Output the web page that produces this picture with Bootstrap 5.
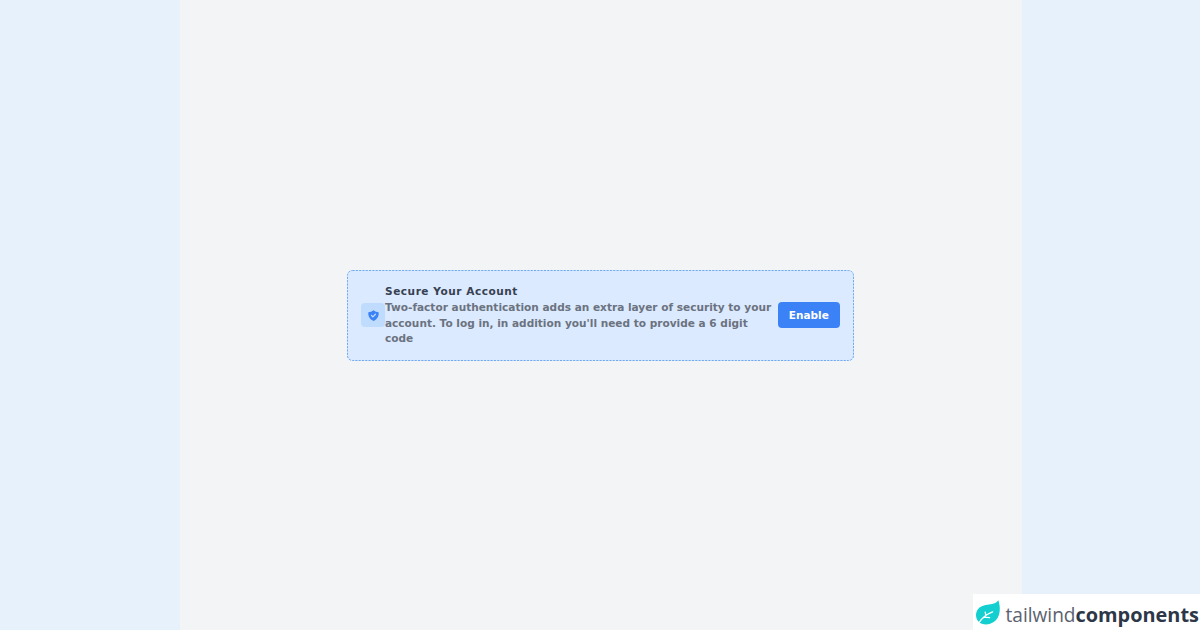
<!DOCTYPE html>
<html lang="en">
<head>
    <meta charset="UTF-8">
    <meta name="viewport" content="width=device-width, initial-scale=1.0">
    <title>Secure Your Account</title>
    <link href="https://cdn.jsdelivr.net/npm/bootstrap@5.3.0/dist/css/bootstrap.min.css" rel="stylesheet">
    <style>
        body {
            background: #e6f1fc;
            font-family: "DejaVu Sans", sans-serif;
        }
        .preview {
            width: 842px;
            margin-left: 180px;
            background: #f3f4f6;
        }
        .notice {
            width: 507px;
            height: 91px;
            margin-right: 1px;
            padding: 0 14px;
            background: #dbeafe;
            border-radius: 5.3px;
            font-size: 10.55px;
            line-height: 15.8px;
            font-weight: 700;
            color: #6b7280;
        }
        .notice-icon {
            width: 24px;
            height: 24px;
            background: #bfdbfe;
            border-radius: 4px;
        }
        .notice-text {
            width: 393px;
            padding-top: 1px;
        }
        .notice-title {
            font-size: inherit;
            line-height: inherit;
            font-weight: 700;
            letter-spacing: 0.53px;
            color: #374151;
        }
        .btn-enable {
            --bs-btn-padding-x: 0;
            --bs-btn-padding-y: 0;
            --bs-btn-font-size: 10.53px;
            --bs-btn-font-weight: 700;
            --bs-btn-line-height: 26px;
            --bs-btn-color: #fff;
            --bs-btn-bg: #3b82f6;
            --bs-btn-hover-color: #fff;
            --bs-btn-hover-bg: #2563eb;
            --bs-btn-border-width: 0;
            --bs-btn-border-radius: 4px;
            width: 61.5px;
        }
        .brand {
            width: 227px;
            height: 36px;
            background: #fff;
        }
    </style>
</head>
<body>
    <main class="preview vh-100 d-flex align-items-center justify-content-center">
        <div class="notice position-relative d-flex align-items-center">
            <!-- Fine dashed outline -->
            <svg class="position-absolute top-0 start-0 pe-none" width="507" height="91" viewBox="0 0 507 91">
                <rect x="0.5" y="0.5" width="506" height="90" rx="5" fill="none" stroke="#6fa9f5" stroke-dasharray="2.1 1.2"/>
            </svg>
            <div class="notice-icon flex-shrink-0 d-flex align-items-center justify-content-center">
                <svg width="13" height="13" viewBox="0 0 20 20" fill="#3b82f6">
                    <path fill-rule="evenodd" clip-rule="evenodd" d="M2.166 4.999A11.954 11.954 0 0010 1.944 11.954 11.954 0 0017.834 5c.11.65.166 1.32.166 2.001 0 5.225-3.34 9.67-8 11.317C5.34 16.67 2 12.225 2 7c0-.682.057-1.35.166-2.001zm11.541 3.708a1 1 0 00-1.414-1.414L9 10.586 7.707 9.293a1 1 0 00-1.414 1.414l2 2a1 1 0 001.414 0l4-4z"/>
                </svg>
            </div>
            <div class="notice-text flex-shrink-0">
                <h1 class="notice-title mb-0">Secure Your Account</h1>
                <p class="mb-0">Two-factor authentication adds an extra layer of security to your account. To log in, in addition you'll need to provide a 6 digit code</p>
            </div>
            <button type="button" class="btn btn-enable flex-shrink-0">Enable</button>
        </div>
    </main>

    <!-- Brand badge over the bottom right corner -->
    <div class="brand position-fixed bottom-0 end-0">
        <svg class="d-block" width="227" height="36" viewBox="0 0 227 36">
            <path fill="#14cfd0" d="M25.4 6.2C27 11.5 27.8 18 24.8 23.6C21.8 29.4 14.6 31.6 9 29.8C3.4 28 1.4 20.8 4.4 16C6.8 11.8 11.6 11 16 10.4C20.4 9.8 23.6 9 25.4 6.2Z"/>
            <path fill="none" stroke="#fff" stroke-width="1.3" stroke-linecap="round" d="M5.4 29.4C8.2 24.8 12.4 20.6 19.6 17.8M12.8 21.2L12.2 18.2M10.8 23.2L16.6 23.6"/>
            <text x="32.5" y="27.7" font-family="'Open Sans', sans-serif" font-size="20" font-weight="400" fill="#5b616e" textLength="70" lengthAdjust="spacingAndGlyphs">tailwind</text>
            <text x="102.5" y="27.7" font-family="'Open Sans', sans-serif" font-size="20" font-weight="700" fill="#2d3748" textLength="123.5" lengthAdjust="spacingAndGlyphs">components</text>
        </svg>
    </div>

    <script src="https://cdn.jsdelivr.net/npm/bootstrap@5.3.0/dist/js/bootstrap.bundle.min.js"></script>
</body>
</html>
